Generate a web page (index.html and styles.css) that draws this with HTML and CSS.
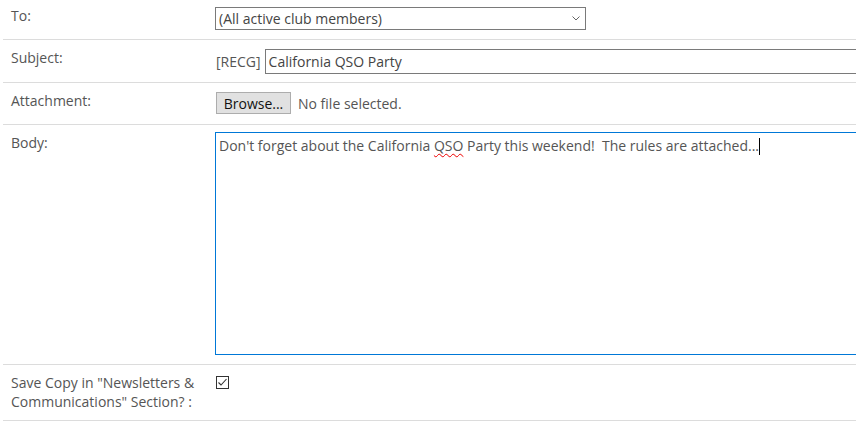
FILE: index.html
```html
<!DOCTYPE html>
<html>
<head>
<meta charset="utf-8">
<link rel="stylesheet" href="styles.css">
</head>
<body>
<div class="form">
  <div class="row row-to">
    <div class="label">To:</div>
    <div class="value">
      <div class="select">
        <span>(All active club members)</span>
        <svg class="chev" width="8" height="5" viewBox="0 0 8 5"><polyline points="0.5,0.5 4,4 7.5,0.5" fill="none" stroke="#666" stroke-width="1"/></svg>
      </div>
    </div>
  </div>
  <div class="row row-subject">
    <div class="label">Subject:</div>
    <div class="value subject">
      <span class="prefix">[RECG]</span>
      <div class="input">California QSO Party</div>
    </div>
  </div>
  <div class="row row-attach">
    <div class="label">Attachment:</div>
    <div class="value attach">
      <div class="button">Browse...</div>
      <span class="nofile">No file selected.</span>
    </div>
  </div>
  <div class="row row-body">
    <div class="label">Body:</div>
    <div class="value">
      <div class="textarea">Don't forget about the California <span class="misspell">QSO</span> Party this weekend!&nbsp; The rules are attached...<span class="caret"></span></div>
    </div>
  </div>
  <div class="row row-save">
    <div class="label">Save Copy in "Newsletters &amp; Communications" Section? :</div>
    <div class="value">
      <div class="checkbox">
        <svg width="11" height="11" viewBox="0 0 11 11"><polyline points="1.5,5.5 4,8 9.5,2" fill="none" stroke="#333" stroke-width="1.1"/></svg>
      </div>
    </div>
  </div>
</div>
</body>
</html>
```
FILE: styles.css
```css
html, body {
  margin: 0;
  padding: 0;
  background: #fff;
  overflow: hidden;
}
body {
  font-family: "Open Sans", "Liberation Sans", sans-serif;
  font-size: 14px;
  line-height: 19px;
  color: #555;
}
.form {
  margin: -2px 0 0 3px;
}
.row {
  display: grid;
  grid-template-columns: 212px 1fr;
  border-bottom: 1px solid #dcdcdc;
}
.label {
  padding: 8px 8px 9px 8px;
  color: #555;
}
.value {
  display: flex;
  align-items: flex-start;
  min-width: 0;
}
.row-to .value { padding: 9px 0 9px 0; }
.row-subject .value { padding: 9px 0 8px 0; align-items: center; }
.row-attach .value { padding: 9px 0 10px 0; align-items: center; }
.row-body .value { padding: 7px 0 9px 0; }
.row-save .value { padding: 11px 0 0 0; }

.select {
  box-sizing: border-box;
  width: 371px;
  height: 23px;
  border: 1px solid #7a7a7a;
  display: flex;
  align-items: center;
  justify-content: space-between;
  padding: 0 5px 0 3px;
  color: #444;
  background: #fff;
}
.chev { display: block; }

.prefix {
  margin-left: 1px;
  color: #555;
}
.input {
  box-sizing: border-box;
  margin-left: 4px;
  width: 700px;
  flex: none;
  height: 25px;
  border: 1px solid #7a7a7a;
  padding: 2px 3px;
  color: #444;
}

.button {
  box-sizing: border-box;
  margin-left: 1px;
  width: 75px;
  height: 22px;
  border: 1px solid #adadad;
  background: #e1e1e1;
  color: #111;
  display: flex;
  align-items: center;
  justify-content: center;
}
.nofile {
  margin-left: 7px;
  color: #555;
}

.textarea {
  box-sizing: border-box;
  width: 700px;
  flex: none;
  height: 223px;
  border: 1px solid #0078d7;
  padding: 3px 3px;
  color: #555;
  white-space: pre-wrap;
}
.misspell {
  text-decoration: underline wavy #e00;
  text-decoration-thickness: 1px;
  text-underline-offset: 2px;
}
.caret {
  display: inline-block;
  width: 1px;
  height: 17px;
  background: #000;
  vertical-align: -4px;
}

.checkbox {
  box-sizing: border-box;
  width: 13px;
  height: 13px;
  margin-left: 1px;
  border: 1px solid #333;
  background: #fff;
  display: flex;
  align-items: center;
  justify-content: center;
}
.checkbox svg { display: block; }
```
